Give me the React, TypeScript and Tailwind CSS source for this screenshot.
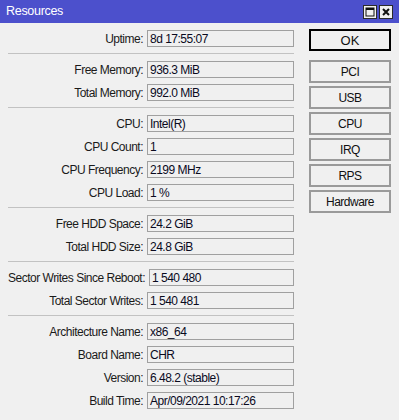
import React from "react";

type Row = { label: string; value: string };

const groups: Row[][] = [
  [{ label: "Uptime:", value: "8d 17:55:07" }],
  [
    { label: "Free Memory:", value: "936.3 MiB" },
    { label: "Total Memory:", value: "992.0 MiB" },
  ],
  [
    { label: "CPU:", value: "Intel(R)" },
    { label: "CPU Count:", value: "1" },
    { label: "CPU Frequency:", value: "2199 MHz" },
    { label: "CPU Load:", value: "1 %" },
  ],
  [
    { label: "Free HDD Space:", value: "24.2 GiB" },
    { label: "Total HDD Size:", value: "24.8 GiB" },
  ],
  [
    { label: "Sector Writes Since Reboot:", value: "1 540 480" },
    { label: "Total Sector Writes:", value: "1 540 481" },
  ],
  [
    { label: "Architecture Name:", value: "x86_64" },
    { label: "Board Name:", value: "CHR" },
    { label: "Version:", value: "6.48.2 (stable)" },
    { label: "Build Time:", value: "Apr/09/2021 10:17:26" },
  ],
];

const buttons = ["PCI", "USB", "CPU", "IRQ", "RPS", "Hardware"];

function Field({ label, value }: Row) {
  return (
    <div className="flex h-[23px] items-center">
      <span className="flex-1 text-right whitespace-nowrap text-[#1a1a1a]">{label}</span>
      <div className="ml-[4px] flex h-[17px] w-[147px] items-center border border-[#a0a0a0] bg-[#f0f0f0] pl-[2px] text-[#0a0a1e]">
        {value}
      </div>
    </div>
  );
}

function TitleButton({ kind }: { kind: "max" | "close" }) {
  return (
    <div className="flex h-[14px] w-[14px] items-center justify-center border border-[#2b2b2b] bg-[#f0f0f0]">
      {kind === "max" ? (
        <svg width="10" height="10" viewBox="0 0 10 10">
          <rect x="1" y="1" width="8" height="8" fill="none" stroke="#111" strokeWidth="1" />
          <rect x="1" y="1" width="8" height="2" fill="#111" />
        </svg>
      ) : (
        <svg width="10" height="10" viewBox="0 0 10 10">
          <path d="M2 2 L8 8 M8 2 L2 8" stroke="#111" strokeWidth="2" />
        </svg>
      )}
    </div>
  );
}

export default function App() {
  return (
    <div
      className="h-[420px] w-[399px] overflow-hidden bg-[#f0f0f0] text-[12px] tracking-[-0.5px]"
      style={{ fontFamily: '"Liberation Sans", Arial, sans-serif' }}
    >
      <div className="flex h-[23px] items-center justify-between bg-[#4c50cc] pl-[6px] pr-[6px]">
        <span className="text-[12.5px] tracking-[-0.3px] text-white">Resources</span>
        <div className="flex gap-[2px]">
          <TitleButton kind="max" />
          <TitleButton kind="close" />
        </div>
      </div>

      <div className="flex gap-[15px] pl-[8px] pt-[4px]">
        <div className="w-[286px]">
          {groups.map((g, i) => (
            <div key={i}>
              {i > 0 && (
                <div className="flex h-[8px] flex-col pt-[3px]">
                  <div className="h-px w-full bg-[#c2c2c2]" />
                </div>
              )}
              {g.map((r) => (
                <Field key={r.label} label={r.label} value={r.value} />
              ))}
            </div>
          ))}
        </div>

        <div className="mt-[2px] flex w-[82px] flex-col">
          <button className="mb-[9px] h-[22px] border-2 border-black bg-[#f0f0f0] text-[13px] tracking-normal text-[#111]">
            OK
          </button>
          <div className="flex flex-col gap-[3px]">
            {buttons.map((b) => (
              <button
                key={b}
                className="h-[23px] border-2 border-[#9a9a9a] bg-[#f0f0f0] text-[12px] text-[#111]"
              >
                {b}
              </button>
            ))}
          </div>
        </div>
      </div>
    </div>
  );
}
